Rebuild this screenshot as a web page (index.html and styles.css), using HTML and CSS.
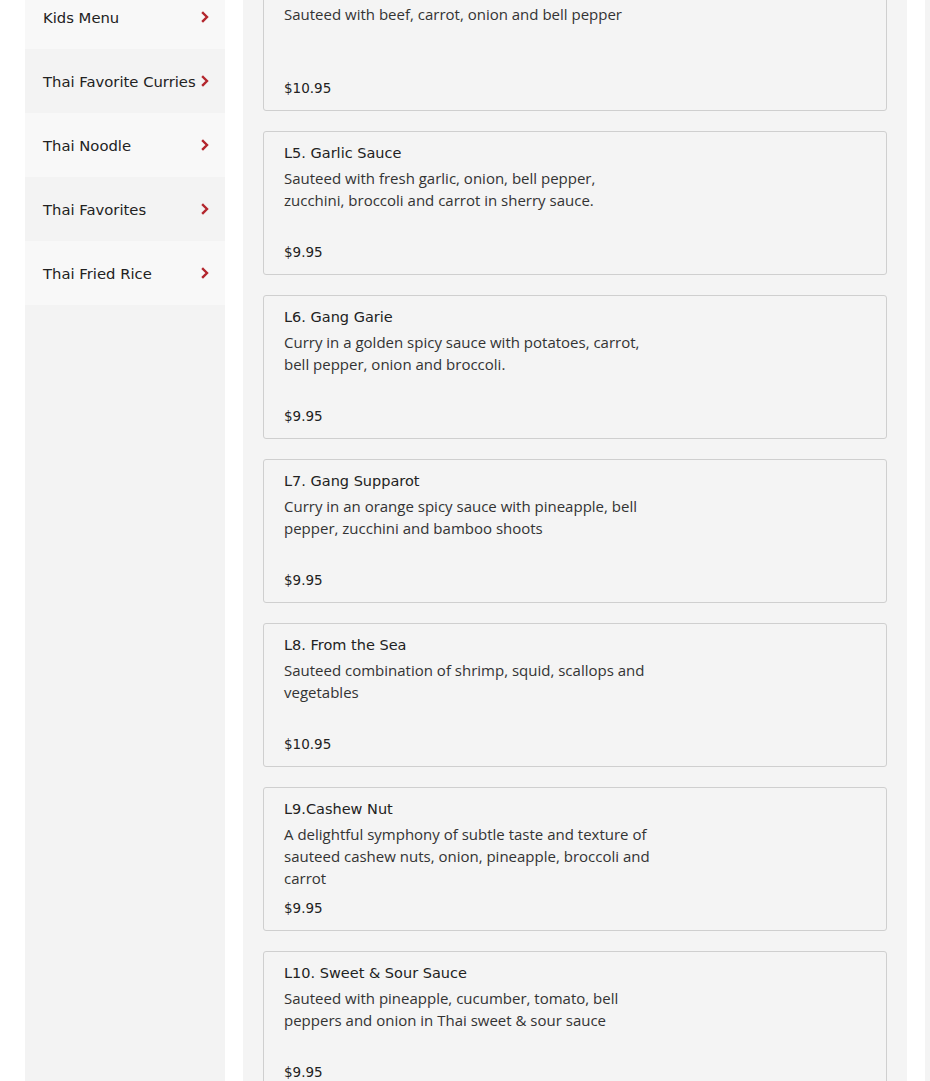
FILE: index.html
```html
<!DOCTYPE html>
<html lang="en">
<head>
<meta charset="utf-8">
<title>Menu</title>
<link rel="stylesheet" href="styles.css">
</head>
<body>
<div class="page">
  <aside class="sidebar">
    <a class="cat light" href="#">Kids Menu<svg class="chev" viewBox="0 0 8 12" width="8" height="12"><polyline points="2,2 6,6 2,10"/></svg></a>
    <a class="cat dark" href="#">Thai Favorite Curries<svg class="chev" viewBox="0 0 8 12" width="8" height="12"><polyline points="2,2 6,6 2,10"/></svg></a>
    <a class="cat light" href="#">Thai Noodle<svg class="chev" viewBox="0 0 8 12" width="8" height="12"><polyline points="2,2 6,6 2,10"/></svg></a>
    <a class="cat dark" href="#">Thai Favorites<svg class="chev" viewBox="0 0 8 12" width="8" height="12"><polyline points="2,2 6,6 2,10"/></svg></a>
    <a class="cat light" href="#">Thai Fried Rice<svg class="chev" viewBox="0 0 8 12" width="8" height="12"><polyline points="2,2 6,6 2,10"/></svg></a>
  </aside>
  <main class="items">
    <div class="card">
      <div class="title">L4. Pepper Steak</div>
      <div class="desc">Sauteed with beef, carrot, onion and bell pepper</div>
      <div class="price">$10.95</div>
    </div>
    <div class="card">
      <div class="title">L5. Garlic Sauce</div>
      <div class="desc">Sauteed with fresh garlic, onion, bell pepper, zucchini, broccoli and carrot in sherry sauce.</div>
      <div class="price">$9.95</div>
    </div>
    <div class="card">
      <div class="title">L6. Gang Garie</div>
      <div class="desc">Curry in a golden spicy sauce with potatoes, carrot, bell pepper, onion and broccoli.</div>
      <div class="price">$9.95</div>
    </div>
    <div class="card">
      <div class="title">L7. Gang Supparot</div>
      <div class="desc">Curry in an orange spicy sauce with pineapple, bell pepper, zucchini and bamboo shoots</div>
      <div class="price">$9.95</div>
    </div>
    <div class="card">
      <div class="title">L8. From the Sea</div>
      <div class="desc">Sauteed combination of shrimp, squid, scallops and vegetables</div>
      <div class="price">$10.95</div>
    </div>
    <div class="card">
      <div class="title">L9.Cashew Nut</div>
      <div class="desc">A delightful symphony of subtle taste and texture of sauteed cashew nuts, onion, pineapple, broccoli and carrot</div>
      <div class="price">$9.95</div>
    </div>
    <div class="card">
      <div class="title">L10. Sweet &amp; Sour Sauce</div>
      <div class="desc">Sauteed with pineapple, cucumber, tomato, bell peppers and onion in Thai sweet &amp; sour sauce</div>
      <div class="price">$9.95</div>
    </div>
  </main>
  <aside class="cart"></aside>
</div>
</body>
</html>
```
FILE: styles.css
```css
html, body {
  margin: 0;
  padding: 0;
  background: #ffffff;
  height: 100%;
  overflow: hidden;
}
.page {
  display: flex;
  gap: 18px;
  padding-left: 25px;
  margin-top: -53px;
  min-height: 1200px;
  align-items: stretch;
}
.sidebar {
  width: 200px;
  flex: 0 0 200px;
  background: #f3f3f3;
  padding-top: 38px;
  display: flex;
  flex-direction: column;
}
.cat {
  height: 64px;
  display: flex;
  align-items: center;
  justify-content: space-between;
  padding: 0 16px 0 18px;
  font-family: "DejaVu Sans", "Noto Sans", sans-serif;
  font-weight: 500;
  font-size: 14.8px;
  color: #222;
  text-decoration: none;
  box-sizing: border-box;
}
.cat.light { background: #f8f8f8; }
.cat.dark { background: #f3f3f3; }
.chev {
  fill: none;
  stroke: #b3262d;
  stroke-width: 2.4;
  stroke-linecap: square;
  stroke-linejoin: miter;
  flex: 0 0 auto;
}
.items {
  width: 624px;
  flex: 0 0 624px;
  background: #f4f4f4;
  padding: 20px;
  display: flex;
  flex-direction: column;
  gap: 20px;
}
.card {
  border: 1px solid #cfcfcf;
  border-radius: 3px;
  background: #f4f4f4;
  padding: 11px 20px 12px;
}
.title {
  font-family: "DejaVu Sans", "Noto Sans", sans-serif;
  font-weight: 500;
  font-size: 14.5px;
  line-height: 20px;
  color: #222;
}
.desc {
  margin-top: 4px;
  max-width: 370px;
  min-height: 66px;
  font-family: "Open Sans", sans-serif;
  font-size: 15px;
  line-height: 22px;
  color: #333;
}
.price {
  margin-top: 9px;
  font-family: "DejaVu Sans", "Noto Sans", sans-serif;
  font-weight: 500;
  font-size: 13.5px;
  line-height: 20px;
  color: #222;
}
.cart {
  flex: 1 1 auto;
  background: #f4f4f4;
}
```
